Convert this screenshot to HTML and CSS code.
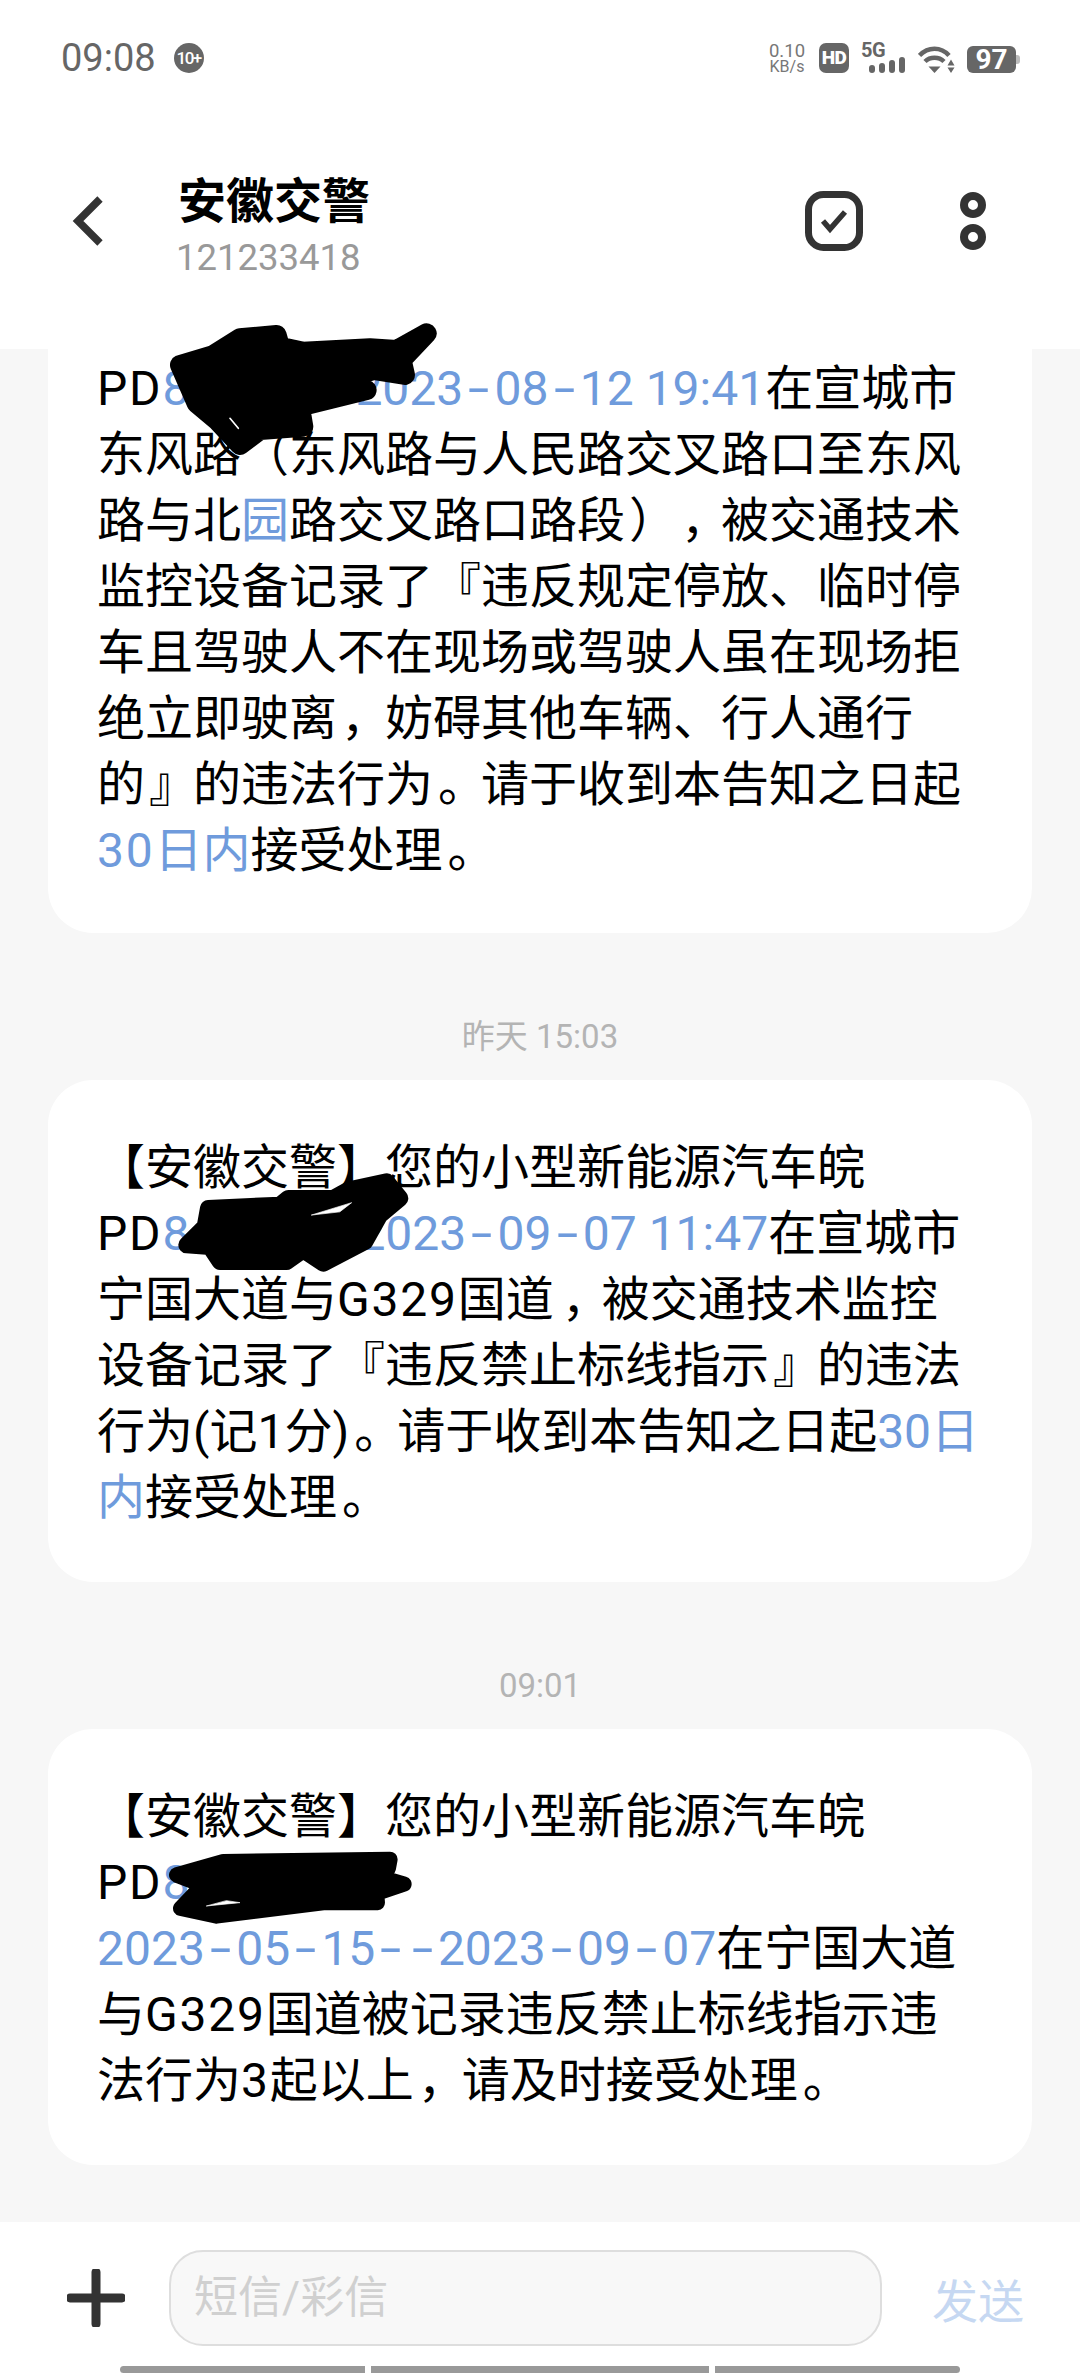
FILE: index.html
```html
<!DOCTYPE html>
<html lang="zh-CN">
<head>
<meta charset="utf-8">
<title>安徽交警</title>
<link rel="stylesheet" href="styles.css">
</head>
<body>
<div class="phone">
  <header class="top">
    <div class="status">
      <span class="clock">09:08</span>
      <span class="badge">10+</span>
      <span class="grow"></span>
      <span class="net"><b>0.10</b><i>KB/s</i></span>
      <span class="hd">HD</span>
      <span class="signal">
        <span class="fiveg">5G</span>
        <span class="bars"><u class="b1"></u><u class="b2"></u><u class="b3"></u><u class="b4"></u></span>
      </span>
      <svg class="wifi" width="37" height="29" viewBox="0 0 37 29"><path d="M1.500 11.500C10 2.500 23 2.500 31 11.500" fill="none" stroke="#666" stroke-width="4.500"/><path d="M7 17.500C12 12.500 21 12.500 26 17.500" fill="none" stroke="#666" stroke-width="4.500"/><path d="M10.500 22.500H22.500L16.500 29Z" fill="#666"/><path d="M33 15.500L36.500 21.500H29.500Z M29.500 23.500H36.500L33 29Z" fill="#666"/></svg>
      <span class="battery"><span class="cell">97</span><span class="nub"></span></span>
    </div>
    <div class="bar">
      <svg class="back" width="32" height="50" viewBox="0 0 32 50"><path d="M28 3L6 25L28 47" fill="none" stroke="#333" stroke-width="7.500"/></svg>
      <div class="who">
        <div class="name">安徽交警</div>
        <div class="number">121233418</div>
      </div>
      <svg class="check" width="58" height="60" viewBox="0 0 58 60"><rect x="3.500" y="3.500" width="51" height="53" rx="15" fill="none" stroke="#333" stroke-width="7"/><path d="M18 30L25 38L40 21" fill="none" stroke="#333" stroke-width="5.500"/></svg>
      <svg class="more" width="26" height="58" viewBox="0 0 26 58"><circle cx="13" cy="13" r="9" fill="none" stroke="#333" stroke-width="8"/><circle cx="13" cy="45" r="9" fill="none" stroke="#333" stroke-width="8"/></svg>
    </div>
  </header>

  <main class="list">
    <article class="card first"><span class="lat">PD</span><span class="link">8</span><span class="gap g1"></span>于<span class="link">2023<span class="hy">-</span>08<span class="hy">-</span>12 19:41</span>在宣城市<br>东风路（东风路与人民路交叉路口至东风<br>路与北<span class="link">园</span>路交叉路口路段<span class="p p4">）</span><span class="p p8">，</span>被交通技术<br>监控设备记录了『违反规定停放、临时停<br>车且驾驶人不在现场或驾驶人虽在现场拒<br>绝立即驶离<span class="p p4">，</span>妨碍其他车辆、行人通行<br>的<span class="p p4">』</span>的违法行为<span class="p p5">。</span>请于收到本告知之日起<br><span class="link"><span class="lat">30</span>日内</span>接受处理<span class="p p5">。</span></article>
    <time class="stamp">昨天 15:03</time>
    <article class="card">【安徽交警】您的小型新能源汽车皖<br><span class="lat">PD</span><span class="link">8</span><span class="gap g2"></span>于<span class="link">2023<span class="hy">-</span>09<span class="hy">-</span>07 11:47</span>在宣城市<br>宁国大道与<span class="lat">G329</span>国道<span class="p p8">，</span>被交通技术监控<br>设备记录了『违反禁止标线指示<span class="p p4">』</span>的违法<br>行为(记1分)<span class="p p5">。</span>请于收到本告知之日起<span class="link">30日</span><br><span class="link">内</span>接受处理<span class="p p5">。</span></article>
    <time class="stamp">09:01</time>
    <article class="card">【安徽交警】您的小型新能源汽车皖<br><span class="lat">PD</span><span class="link">8</span><br><span class="link">2023<span class="hy">-</span>05<span class="hy">-</span>15<span class="hy">-</span><span class="hy">-</span>2023<span class="hy">-</span>09<span class="hy">-</span>07</span>在宁国大道<br>与<span class="lat">G329</span>国道被记录违反禁止标线指示违<br>法行为<span class="lat">3</span>起以上<span class="p p4">，</span>请及时接受处理<span class="p p5">。</span></article>
  </main>

  <footer class="compose">
    <svg class="plus" width="58" height="58" viewBox="0 0 58 58"><path d="M29 3V55M3 29H55" fill="none" stroke="#333" stroke-width="9" stroke-linecap="round"/></svg>
    <div class="input">短信/彩信</div>
    <div class="send">发送</div>
  </footer>
  <div class="nav"><span class="seg s1"></span><span class="seg s2"></span><span class="seg s3"></span></div>

  <svg class="scribble" width="1080" height="2376" viewBox="0 0 1080 2376">
    <g transform="translate(40 320) scale(.3333)" fill="#000" stroke="#000" stroke-width="60" stroke-linejoin="round" stroke-linecap="round">
      <path d="M420 135L520 105L600 55L710 45L720 80L790 95L990 85L1070 90L1160 40L1085 120L1095 165L1000 150L880 190L980 210L780 260L790 320L660 330L600 375L530 300L470 250Z"/>
      <path d="M570 295L595 325" stroke="#fff" stroke-width="5"/>
    </g>
    <g transform="translate(40 1130) scale(.3333)" fill="#000" stroke="#000" stroke-width="50" stroke-linejoin="round" stroke-linecap="round">
      <path d="M505 235L720 225L745 205L880 205L925 180L1040 155L1080 205L1020 255L975 335L850 400L790 360L740 395L540 395L510 350L440 345L495 290Z"/>
      <path d="M815 255L935 218L900 245Z" fill="#fff" stroke="#fff" stroke-width="2"/>
    </g>
    <g transform="translate(40 1780) scale(.3333)" fill="#000" stroke="#000" stroke-width="46" stroke-linejoin="round" stroke-linecap="round">
      <path d="M410 285L550 245L1050 238L1045 265L1010 288L1092 312L1010 340L1012 368L850 368L530 408L422 385L470 335L500 320Z"/>
      <path d="M500 378L600 368L560 362Z" fill="#fff" stroke="#fff" stroke-width="2"/>
    </g>
  </svg>
</div>
</body>
</html>
```
FILE: styles.css
```css
* { box-sizing: border-box; }
html, body { margin: 0; padding: 0; }
body { font-family: Roboto, "Noto Sans CJK SC", sans-serif; color: #000; background: #f7f7f7; text-spacing-trim: space-all; }
.phone { position: relative; width: 1080px; height: 2376px; overflow: hidden; display: flex; flex-direction: column; background: #f7f7f7; }

.top { height: 349px; background: #fff; flex: none; padding-top: 43px; }
.status { height: 30px; padding: 0 60px 0 61px; display: flex; align-items: center; color: #666; }
.grow { flex: 1; }
.clock { font-size: 38px; line-height: 30px; color: #666; }
.badge { margin-left: 18px; width: 30px; height: 30px; border-radius: 50%; background: #666; color: #fff; font-size: 17px; font-weight: 500; line-height: 30px; text-align: center; letter-spacing: -1.500px; }
.net { width: 38px; display: flex; flex-direction: column; align-items: center; font-size: 18.500px; line-height: 17px; color: #777; }
.net b { font-weight: 400; }
.net i { font-style: normal; font-size: 16px; line-height: 14px; }
.hd { margin-left: 13px; width: 30px; height: 30px; border-radius: 7px; background: #666; color: #fff; font-size: 19px; font-weight: 900; line-height: 30px; text-align: center; letter-spacing: -.5px; }
.signal { position: relative; margin-left: 12px; width: 44px; height: 30px; display: block; }
.fiveg { position: absolute; left: 0; top: 0; font-size: 20px; font-weight: 700; line-height: 14px; color: #666; letter-spacing: -.5px; }
.bars { position: absolute; right: 0; bottom: 0; display: flex; align-items: flex-end; gap: 4px; }
.bars u { display: block; width: 6px; border-radius: 3px; background: #666; }
.b1 { height: 8px; } .b2 { height: 10px; } .b3 { height: 13px; } .b4 { height: 16px; }
.wifi { margin-left: 13px; }
.battery { margin-left: 12px; display: flex; align-items: center; height: 27px; align-self: flex-end; }
.cell { width: 49px; height: 27px; border-radius: 6px; background: #666; color: #fff; font-size: 28px; font-weight: 700; line-height: 27px; text-align: center; }
.nub { width: 4px; height: 9px; border-radius: 0 3px 3px 0; background: #bbb; }

.bar { margin-top: 98px; display: flex; align-items: center; padding: 0 94px 0 72px; height: 100px; }
.back { flex: none; }
.who { margin: 18px 0 0 74px; flex: 1; }
.name { font-size: 48px; font-weight: 700; line-height: 56px; }
.number { font-size: 36.500px; line-height: 56px; color: #999; margin-left: -2px; }
.check { flex: none; }
.more { flex: none; margin-left: 97px; }

.list { flex: 1; padding: 0 48px; display: flex; flex-direction: column; }
.card { background: #fff; border-radius: 45px; padding: 55px 48px 51px 49px; font-size: 48px; line-height: 66px; white-space: nowrap; }
.card.first { border-radius: 0 0 45px 45px; padding-top: 7px; padding-bottom: 49px; }
.stamp { display: block; height: 147px; padding-top: 86px; font-size: 33px; line-height: 36px; color: #b4b4b4; text-align: center; }
.link { color: #6f9bdc; }
.hy { display: inline-block; margin: 0 9px; transform: scaleX(1.6); }
.lat { letter-spacing: 1.800px; }
.p { display: inline-block; width: 48px; font-feature-settings: "halt"; }
.p4 { padding-left: 4px; }
.p5 { padding-left: 5px; }
.p8 { padding-left: 8px; }
.gap { display: inline-block; }
.g1 { width: 118px; }
.g2 { width: 121px; }

.compose { height: 154px; flex: none; background: #fff; display: flex; align-items: center; padding: 0 56px 2px 67px; }
.plus { flex: none; }
.input { margin-left: 44px; width: 713px; height: 96px; flex: none; border: 2px solid #dedede; border-radius: 34px; background: #f8f8f8; color: #d0d0d0; font-size: 44px; line-height: 92px; padding-left: 23px; }
.send { margin-left: auto; font-size: 46px; color: #c6d8f2; }
.nav { position: absolute; left: 120px; top: 2366px; display: flex; gap: 6px; }
.seg { height: 7px; background: #999; }
.s1 { width: 245px; border-radius: 4px 0 0 4px; }
.s2 { width: 338px; }
.s3 { width: 245px; border-radius: 0 4px 4px 0; }
.scribble { position: absolute; left: 0; top: 0; pointer-events: none; }
```
